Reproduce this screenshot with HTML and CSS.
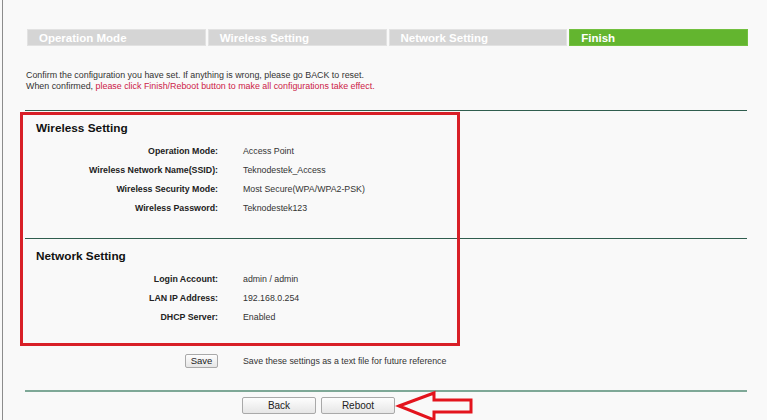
FILE: index.html
```html
<!DOCTYPE html>
<html>
<head>
<meta charset="utf-8">
<title>Quick Setup - Finish</title>
<link rel="stylesheet" href="styles.css">
</head>
<body>
<div class="page">
  <div class="tabs">
    <div class="tab">Operation Mode</div>
    <div class="tab">Wireless Setting</div>
    <div class="tab">Network Setting</div>
    <div class="tab tab-active">Finish</div>
  </div>

  <p class="intro">Confirm the configuration you have set. If anything is wrong, please go BACK to reset.<br>When confirmed, <span class="warn">please click Finish/Reboot button to make all configurations take effect.</span></p>

  <div class="section section-wireless">
    <h2 class="section-title">Wireless Setting</h2>
    <div class="rows">
      <div class="label">Operation Mode:</div><div class="value">Access Point</div>
      <div class="label">Wireless Network Name(SSID):</div><div class="value">Teknodestek_Access</div>
      <div class="label">Wireless Security Mode:</div><div class="value">Most Secure(WPA/WPA2-PSK)</div>
      <div class="label">Wireless Password:</div><div class="value">Teknodestek123</div>
    </div>
  </div>

  <div class="section section-network">
    <h2 class="section-title">Network Setting</h2>
    <div class="rows">
      <div class="label">Login Account:</div><div class="value">admin / admin</div>
      <div class="label">LAN IP Address:</div><div class="value">192.168.0.254</div>
      <div class="label">DHCP Server:</div><div class="value">Enabled</div>
    </div>
  </div>

  <div class="save-row">
    <div class="save-cell"><button class="btn btn-save">Save</button></div>
    <div class="value">Save these settings as a text file for future reference</div>
  </div>

  <div class="actions">
    <button class="btn btn-wide">Back</button>
    <button class="btn btn-wide">Reboot</button>
  </div>

  <div class="highlight-box"></div>
  <svg class="arrow" width="82" height="34" viewBox="0 0 82 34" aria-hidden="true">
    <polygon points="4,16 39,3 39,10 76,10 76,22 39,22 39,30" fill="none" stroke="#e3141d" stroke-width="3" stroke-linejoin="miter"/>
  </svg>
</div>
</body>
</html>
```

FILE: styles.css
```css
html, body {
  margin: 0;
  padding: 0;
  background: #f9f9f9;
  overflow: hidden;
}

body {
  font-family: "Liberation Sans", Arial, sans-serif;
  color: #333;
}

.page {
  position: relative;
  margin-left: 2px;
  border-left: 1px solid #8c8c8c;
  height: 420px;
  width: 764px;
  box-sizing: border-box;
  padding-left: 22px;
}

.tabs {
  display: flex;
  gap: 2px;
  width: 721px;
  padding-top: 29px;
  margin-left: 2px;
}

.tab {
  flex: 1;
  height: 17px;
  line-height: 16px;
  box-sizing: border-box;
  background: #d5d5d5;
  border: 1px solid #e2e2e2;
  color: #fff;
  font-weight: bold;
  font-size: 11.5px;
  padding-left: 11px;
}

.tab-active {
  background: #63b52f;
  border-color: #72c03f;
}

.intro {
  margin: 24px 0 0 1px;
  font-size: 8.9px;
  line-height: 11px;
  color: #333;
}

.warn {
  color: #cc2147;
}

.section {
  width: 722px;
  border-top: 1px solid #2f5d4e;
  box-sizing: border-box;
}

.section-wireless {
  margin-top: 18px;
  height: 128px;
  padding-top: 10px;
}

.section-network {
  height: 100px;
  padding-top: 10px;
}

.section-title {
  margin: 0 0 6px 11px;
  font-size: 11.8px;
  line-height: 14px;
  font-weight: bold;
  color: #111;
}

.rows {
  display: grid;
  grid-template-columns: 193px 1fr;
  column-gap: 25px;
  grid-auto-rows: 19px;
  align-items: center;
  font-size: 8.8px;
}

.label {
  text-align: right;
  font-weight: bold;
  color: #222;
}

.value {
  color: #333;
}

.save-row {
  display: grid;
  grid-template-columns: 193px 1fr;
  column-gap: 25px;
  align-items: center;
  font-size: 8.8px;
  margin-top: 15px;
  height: 15px;
  width: 722px;
  padding-bottom: 22px;
  border-bottom: 2px solid #7ea897;
}

.save-cell {
  text-align: right;
}

.btn {
  font-family: "Liberation Sans", Arial, sans-serif;
  font-size: 9.5px;
  color: #222;
  background: linear-gradient(#fdfdfd, #e6e6e6);
  border: 1px solid #a9a9a9;
  border-radius: 2px;
  padding: 0;
  margin: 0;
}

.btn-save {
  width: 33px;
  height: 14px;
}

.actions {
  display: flex;
  gap: 5px;
  padding: 5px 0 0 217px;
}

.btn-wide {
  width: 74px;
  height: 17px;
  font-size: 10px;
}

.highlight-box {
  position: absolute;
  left: 17px;
  top: 112px;
  width: 440px;
  height: 234px;
  box-sizing: border-box;
  border: 3px solid #d81f27;
}

.arrow {
  position: absolute;
  left: 392px;
  top: 390px;
}
```
